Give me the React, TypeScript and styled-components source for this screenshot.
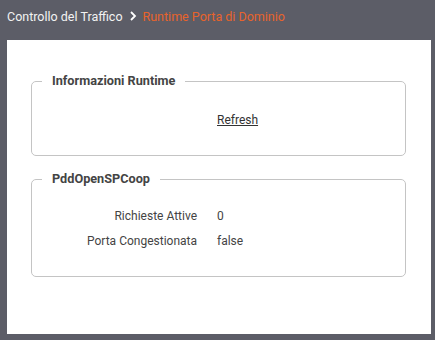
import React from 'react';
import styled, { createGlobalStyle } from 'styled-components';

const GRAY_BG = '#5c5d67';
const ORANGE = '#e8632b';
const TEXT = '#444444';
const BORDER = '#c4c4c4';

const GlobalStyle = createGlobalStyle`
  html, body {
    margin: 0;
    padding: 0;
    background: ${GRAY_BG};
    font-family: Roboto, "Liberation Sans", sans-serif;
  }
`;

interface RowData {
  label: string;
  value: string;
}

const rows: RowData[] = [
  { label: 'Richieste Attive', value: '0' },
  { label: 'Porta Congestionata', value: 'false' },
];

const Chevron = () => (
  <ChevronSvg viewBox="0 0 8 12" width="8" height="12">
    <path d="M2 2l4 4-4 4" fill="none" stroke="#ffffff" strokeWidth="1.8" />
  </ChevronSvg>
);

const App = () => (
  <Page>
    <GlobalStyle />
    <Breadcrumb>
      <Crumb>Controllo del Traffico</Crumb>
      <Chevron />
      <Crumb active>Runtime Porta di Dominio</Crumb>
    </Breadcrumb>
    <Panel>
      <Box>
        <Legend>Informazioni Runtime</Legend>
        <Grid top={22} bottom={25}>
          <span />
          <RefreshLink href="#">Refresh</RefreshLink>
        </Grid>
      </Box>
      <Box second>
        <Legend>PddOpenSPCoop</Legend>
        <Grid top={18} bottom={22}>
          {rows.map((row) => (
            <React.Fragment key={row.label}>
              <Label>{row.label}</Label>
              <Value>{row.value}</Value>
            </React.Fragment>
          ))}
        </Grid>
      </Box>
    </Panel>
  </Page>
);

export default App;

const Page = styled.div`
  display: flex;
  flex-direction: column;
  min-height: 340px;
  background: ${GRAY_BG};
`;

const Breadcrumb = styled.div`
  display: flex;
  align-items: center;
  height: 32px;
  padding: 0 7px;
  margin-bottom: 8px;
  font-size: 12.5px;
`;

const Crumb = styled.span<{ active?: boolean }>`
  color: ${(p) => (p.active ? ORANGE : '#f2f2f2')};
`;

const ChevronSvg = styled.svg`
  margin: 0 6px 0 6px;
`;

const Panel = styled.div`
  margin: 0 4px 9px 7px;
  padding: 34px 25px 57px 24px;
  background: #ffffff;
`;

const Box = styled.fieldset<{ second?: boolean }>`
  margin: ${(p) => (p.second ? '16px' : '0')} 0 0 0;
  padding: 0;
  border: 1px solid ${BORDER};
  border-radius: 5px;
  min-width: 0;
`;

const Legend = styled.legend`
  margin-left: 10px;
  padding: 0 10px;
  font-size: 12.7px;
  line-height: 14px;
  font-weight: 700;
  color: ${TEXT};
`;

const Grid = styled.div<{ top: number; bottom: number }>`
  display: grid;
  grid-template-columns: 165px 1fr;
  column-gap: 20px;
  padding: ${(p) => p.top}px 0 ${(p) => p.bottom}px 0;
  font-size: 12px;
  line-height: 25px;
  color: ${TEXT};
`;

const Label = styled.span`
  text-align: right;
`;

const Value = styled.span``;

const RefreshLink = styled.a`
  justify-self: start;
  line-height: 20px;
  color: #333333;
  text-decoration: underline;
`;
